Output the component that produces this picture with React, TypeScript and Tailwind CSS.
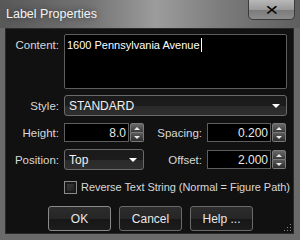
import { ReactNode } from 'react';

const font = { fontFamily: '"Liberation Sans", Arial, sans-serif' };

function Spinner() {
  return (
    <div className="flex flex-col w-[14px] h-full ml-[1px] shrink-0">
      <div className="flex-1 flex items-center justify-center bg-gradient-to-b from-[#6a6a6a] to-[#3a3a3a] border border-[#7a7a7a] rounded-t-[2px]">
        <div className="w-0 h-0 border-l-[3px] border-r-[3px] border-b-[3px] border-l-transparent border-r-transparent border-b-[#e8e8e8]" />
      </div>
      <div className="flex-1 flex items-center justify-center bg-gradient-to-b from-[#5a5a5a] to-[#2e2e2e] border border-t-0 border-[#7a7a7a] rounded-b-[2px]">
        <div className="w-0 h-0 border-l-[3px] border-r-[3px] border-t-[3px] border-l-transparent border-r-transparent border-t-[#e8e8e8]" />
      </div>
    </div>
  );
}

function NumField({ value, width }: { value: string; width: string }) {
  return (
    <div className={`flex h-[19px] shrink-0 ${width}`}>
      <div className="flex-1 bg-black border border-[#5e5e5e] flex items-center justify-end pr-[2px] text-[12px] leading-[14px] text-[#e8e8e8]">
        {value}
      </div>
      <Spinner />
    </div>
  );
}

function Arrow() {
  return <div className="w-0 h-0 border-l-[4px] border-r-[4px] border-t-[4px] border-l-transparent border-r-transparent border-t-white" />;
}

function Label({ children, w }: { children: ReactNode; w: string }) {
  return <div className={`${w} text-right pr-[5px] text-[11.5px] leading-[14px] text-[#d8d8d8] shrink-0`}>{children}</div>;
}

function Btn({ children, primary }: { children: ReactNode; primary?: boolean }) {
  return (
    <div
      className={`w-[63px] h-[25px] rounded-[3px] border flex items-center justify-center text-[12px] leading-[14px] text-[#e8e8e8] bg-[linear-gradient(to_bottom,#2c2c2c_0%,#262626_50%,#171717_51%,#1c1c1c_100%)] ${
        primary ? 'border-[#8a8a8a]' : 'border-[#6a6a6a]'
      }`}
    >
      {children}
    </div>
  );
}

export default function App() {
  return (
    <div className="w-[300px] h-[240px] flex flex-col bg-[#6a6a6a] overflow-hidden" style={font}>
      {/* title bar */}
      <div className="h-[28px] shrink-0 flex items-start bg-[linear-gradient(to_right,#585858_0%,#747474_30%,#9c9c9c_52%,#7a7a7a_75%,#5e5e5e_100%)]">
        <span className="pl-[6px] pt-[6px] text-[12.5px] leading-[16px] text-[#f4f4f4] [text-shadow:0_0_6px_rgba(0,0,0,0.6)]">
          Label Properties
        </span>
        <div className="ml-auto mr-[5px] w-[47px] h-[20px] rounded-b-[5px] border border-t-0 border-[#3a3a3a] bg-[linear-gradient(to_bottom,#b8b8b8_0%,#9a9a9a_50%,#7a7a7a_51%,#8c8c8c_100%)] flex items-center justify-center">
          <span className="text-[14px] font-bold leading-none text-black scale-x-125" style={{ fontFamily: '"DejaVu Sans", sans-serif' }}>
            ✕
          </span>
        </div>
      </div>

      {/* client area */}
      <div className="relative ml-[5px] mr-[6px] mb-[6px] flex-1 bg-[#111111] border border-[#2a2a2a] flex flex-col pt-[5px]">
        {/* content */}
        <div className="flex">
          <Label w="w-[58px]"><span className="block pt-[4px]">Content:</span></Label>
          <div className="w-[223px] h-[55px] bg-black border border-[#5e5e5e] rounded-[2px] px-[2px] pt-[3px] text-[11px] leading-[14px] text-white flex items-start">
            <span>1600 Pennsylvania Avenue</span>
            <span className="w-px h-[14px] bg-white ml-px" />
          </div>
        </div>

        {/* style */}
        <div className="flex items-center mt-[6px]">
          <Label w="w-[58px]">Style:</Label>
          <div className="w-[223px] h-[21px] rounded-[3px] border border-[#6a6a6a] bg-[linear-gradient(to_bottom,#1a1a1a_0%,#1c1c1c_50%,#2a2a2a_51%,#2e2e2e_100%)] flex items-center px-[4px] text-[12px] leading-[14px] text-[#f0f0f0]">
            <span>STANDARD</span>
            <span className="ml-auto mr-[2px]"><Arrow /></span>
          </div>
        </div>

        {/* height / spacing */}
        <div className="flex items-center mt-[7px]">
          <Label w="w-[58px]">Height:</Label>
          <NumField value="8.0" width="w-[80px]" />
          <Label w="w-[63px]">Spacing:</Label>
          <NumField value="0.200" width="w-[79px]" />
        </div>

        {/* position / offset */}
        <div className="flex items-center mt-[7px]">
          <Label w="w-[58px]">Position:</Label>
          <div className="w-[80px] h-[21px] shrink-0 rounded-[3px] border border-[#6a6a6a] bg-[linear-gradient(to_bottom,#1a1a1a_0%,#1c1c1c_50%,#2a2a2a_51%,#2e2e2e_100%)] flex items-center px-[4px] text-[12px] leading-[14px] text-[#f0f0f0]">
            <span>Top</span>
            <span className="ml-auto mr-[2px]"><Arrow /></span>
          </div>
          <Label w="w-[63px]">Offset:</Label>
          <NumField value="2.000" width="w-[79px]" />
        </div>

        {/* checkbox */}
        <div className="flex items-center mt-[10px] pl-[58px]">
          <div className="w-[13px] h-[13px] shrink-0 border border-[#8a8a8a] bg-[#1a1a1a] p-[2px]">
            <div className="w-full h-full bg-gradient-to-br from-[#3a3a3a] to-[#202020]" />
          </div>
          <span className="ml-[4px] whitespace-nowrap text-[11px] leading-[14px] text-[#d8d8d8] tracking-[-0.05px]">
            Reverse Text String (Normal = Figure Path)
          </span>
        </div>

        {/* buttons */}
        <div className="flex mt-[12px] pl-[42px] gap-[8px]">
          <Btn primary>OK</Btn>
          <Btn>Cancel</Btn>
          <Btn>Help ...</Btn>
        </div>

        {/* resize grip */}
        <div className="absolute right-[1px] bottom-[1px] w-[8px] h-[8px] grid grid-cols-3 gap-[1px]">
          <span />
          <span />
          <span className="bg-[#8a8a8a] w-[1px] h-[1px]" />
          <span />
          <span className="bg-[#8a8a8a] w-[1px] h-[1px]" />
          <span className="bg-[#8a8a8a] w-[1px] h-[1px]" />
          <span className="bg-[#8a8a8a] w-[1px] h-[1px]" />
          <span className="bg-[#8a8a8a] w-[1px] h-[1px]" />
          <span className="bg-[#8a8a8a] w-[1px] h-[1px]" />
        </div>
      </div>
    </div>
  );
}
